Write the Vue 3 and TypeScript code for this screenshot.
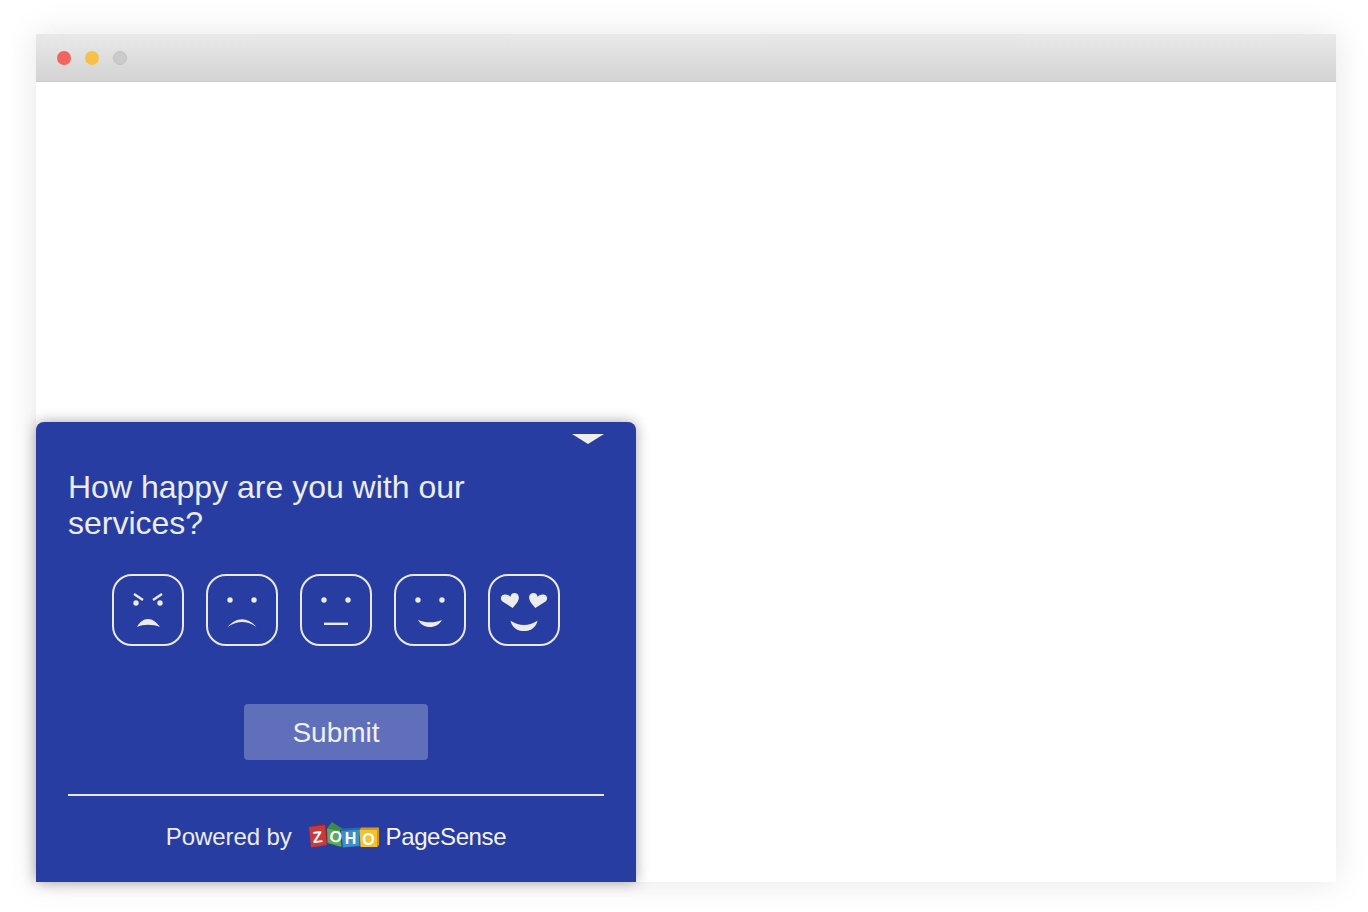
<template>
  <div class="page">
    <div class="browser">
      <div class="titlebar">
        <span class="dot red"></span>
        <span class="dot yellow"></span>
        <span class="dot grey"></span>
      </div>
      <div class="content">
        <div class="survey">
          <div class="caret-row"><span class="caret"></span></div>
          <h2 class="question">How happy are you with our services?</h2>

          <div class="faces">
            <svg class="face" viewBox="0 0 72 72">
              <rect class="frame" x="1" y="1" width="70" height="70" rx="19" />
              <path class="line" d="M22 20l9 6M50 20l-9 6" />
              <circle class="fill" cx="24" cy="29" r="2.700" />
              <circle class="fill" cx="48" cy="29" r="2.700" />
              <path class="fill" d="M25 53c2.500-5 6.500-8 11-8s8.500 3 12 8c-3.500-1.500-8-2.300-12-2.300s-8 .8-11 2.300z" />
            </svg>
            <svg class="face" viewBox="0 0 72 72">
              <rect class="frame" x="1" y="1" width="70" height="70" rx="19" />
              <circle class="fill" cx="24" cy="26" r="2.700" />
              <circle class="fill" cx="48" cy="26" r="2.700" />
              <path class="fill" d="M21.500 53c4.500-5 9.500-7.700 14.500-7.700s10 2.700 14.500 7.700c-5-3.500-10-5-14.500-5s-9.500 1.500-14.500 5z" />
            </svg>
            <svg class="face" viewBox="0 0 72 72">
              <rect class="frame" x="1" y="1" width="70" height="70" rx="19" />
              <circle class="fill" cx="24" cy="26" r="2.700" />
              <circle class="fill" cx="48" cy="26" r="2.700" />
              <rect class="fill" x="24" y="48.600" width="24" height="2.400" />
            </svg>
            <svg class="face" viewBox="0 0 72 72">
              <rect class="frame" x="1" y="1" width="70" height="70" rx="19" />
              <circle class="fill" cx="24" cy="26" r="2.700" />
              <circle class="fill" cx="48" cy="26" r="2.700" />
              <path class="fill" d="M24 46c4 1.600 8 2.300 12 2.300s8-.7 12-2.300c-2.500 4.500-7 7-12 7s-9.500-2.500-12-7z" />
            </svg>
            <svg class="face" viewBox="0 0 72 72">
              <rect class="frame" x="1" y="1" width="70" height="70" rx="19" />
              <path class="fill" d="M24.700 34L14.500 27.500C12 25.500 12.500 21.500 15.500 20.700 18.500 20 21.300 21 22.300 23 22.500 20.500 24.500 18.800 27 19 30 19.300 31.300 22 30.700 25 30 28.500 27 31 24.700 34z" />
              <path class="fill" d="M47.300 34L57.500 27.500C60 25.500 59.500 21.500 56.500 20.700 53.500 20 50.700 21 49.700 23 49.500 20.500 47.500 18.800 45 19 42 19.300 40.700 22 41.300 25 42 28.500 45 31 47.300 34z" />
              <path class="fill" d="M22.500 46.700c4.500 2.800 9 4.300 13.500 4.300s9-1.500 13.500-4.300c-1.500 7-7 10.300-13.500 10.300s-12-3.300-13.500-10.300z" />
            </svg>
          </div>

          <div class="actions">
            <button class="submit" type="button">Submit</button>
          </div>

          <div class="powered">
            <span class="label">Powered by</span>
            <svg class="zoho" viewBox="0 0 72 28">
              <path fill="#8f2326" d="M1 5l.9-1.500 15-2-.9 1.500zM17 3l.9-1.500 1.800 19.500-1 2z" />
              <path fill="#c9383a" d="M1 5l16-2 1.700 20L3 25.500z" />
              <path fill="#3c8c44" d="M19 6.500L24 0l11 7-3 1.500z" />
              <path fill="#58a95a" d="M19 6.500L32 8.500 33.500 25 19.500 21z" />
              <path fill="#1f6ea8" d="M33 9l1.500-2.500L53 5.500l-1.500 2z" />
              <path fill="#3a8fcb" d="M33 9l18.500-1.500V24L35 25.500z" />
              <path fill="#d39c1c" d="M51.500 8l1.500-2.500h18L69.500 8zM69.500 8L71 5.500V23l-1.500 2z" />
              <path fill="#f2c230" d="M51.500 8h18v17h-17z" />
              <text class="z" x="10" y="20.500" transform="rotate(-6 10 20.500)">Z</text>
              <text class="z" x="26.500" y="20" transform="rotate(12 26.500 20)">O</text>
              <text class="z" x="42.500" y="21.500">H</text>
              <text class="z" x="60.500" y="22.500">O</text>
            </svg>
            <span class="brand">PageSense</span>
          </div>
        </div>
      </div>
    </div>
  </div>
</template>

<script setup lang="ts">
</script>

<style>
html,
body {
  background: #fff;
}
</style>

<style scoped>
.page {
  width: 1368px;
  height: 912px;
  padding: 34px 32px 30px 36px;
  box-sizing: border-box;
  overflow: hidden;
  font-family: "Liberation Sans", Arial, sans-serif;
}

.browser {
  height: 100%;
  display: flex;
  flex-direction: column;
  background: #fff;
  box-shadow: 0 0 32px rgba(0, 0, 0, 0.1);
}

.titlebar {
  height: 48px;
  flex: none;
  box-sizing: border-box;
  padding-left: 21px;
  display: flex;
  align-items: center;
  gap: 14px;
  background: linear-gradient(#e9e9e9, #d3d3d3);
  border-bottom: 1px solid #c9c9c9;
}

.dot {
  width: 14px;
  height: 14px;
  border-radius: 50%;
}
.red { background: #f1645f; }
.yellow { background: #f6c146; }
.grey { background: #cbcbcb; border: 1px solid #c2c2c2; box-sizing: border-box; }

.content {
  flex: 1;
  display: flex;
  align-items: flex-end;
}

.survey {
  width: 600px;
  height: 460px;
  box-sizing: border-box;
  padding: 12px 32px 0;
  background: #283da1;
  border-radius: 8px 8px 0 0;
  box-shadow: 0 0 14px rgba(0, 0, 0, 0.35);
  color: #ececf4;
}

.caret-row {
  display: flex;
  justify-content: flex-end;
  height: 10px;
}

.caret {
  width: 0;
  height: 0;
  border-left: 16px solid transparent;
  border-right: 16px solid transparent;
  border-top: 10px solid #eeeeee;
}

.question {
  margin: 25px 0 0;
  font-size: 32px;
  font-weight: 400;
  line-height: 36px;
  width: 440px;
}

.faces {
  margin-top: 33px;
  display: flex;
  justify-content: center;
  gap: 22px;
}

.face {
  width: 72px;
  height: 72px;
  flex: none;
}

.frame {
  fill: none;
  stroke: #e9e9ee;
  stroke-width: 2;
}

.line {
  fill: none;
  stroke: #ececec;
  stroke-width: 2.400;
}

.fill {
  fill: #ececec;
}

.actions {
  margin-top: 58px;
  display: flex;
  justify-content: center;
}

.submit {
  width: 184px;
  height: 56px;
  padding: 1px 0 0;
  border: none;
  border-radius: 4px;
  background: #606fba;
  color: #f0f0f5;
  font-family: inherit;
  font-size: 28px;
}

.powered {
  margin-top: 34px;
  border-top: 2px solid #e6e6ee;
  padding-top: 26px;
  display: flex;
  justify-content: center;
  align-items: center;
  font-size: 24px;
  line-height: 30px;
}

.label {
  letter-spacing: -0.1px;
}

.zoho {
  width: 72px;
  height: 28px;
  flex: none;
  margin: -3px 6px 0 16px;
}

.z {
  fill: #fff;
  font-family: "Liberation Sans", sans-serif;
  font-size: 16px;
  font-weight: 700;
  text-anchor: middle;
}

.brand {
  color: #f4f4f8;
  letter-spacing: -0.4px;
}
</style>
